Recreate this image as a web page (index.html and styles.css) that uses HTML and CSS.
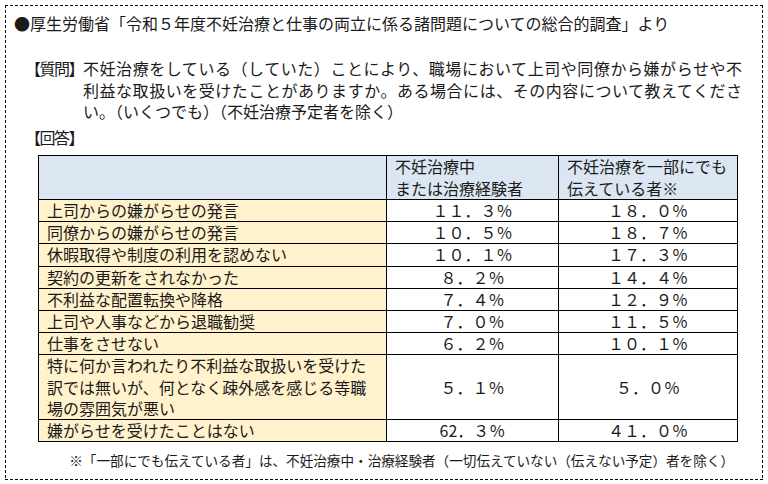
FILE: index.html
```html
<!DOCTYPE html>
<html lang="ja">
<head>
<meta charset="utf-8">
<link rel="stylesheet" href="styles.css">
</head>
<body>
<div class="frame">
  <div class="title">●厚生労働省「令和５年度不妊治療と仕事の両立に係る諸問題についての総合的調査」より</div>
  <div class="question">
    <span class="label">【質問】</span>
    <div class="qtext">
      <span class="line just">不妊治療をしている（していた）ことにより、職場において上司や同僚から嫌がらせや不</span>
      <span class="line just">利益な取扱いを受けたことがありますか。ある場合には、その内容について教えてくださ</span>
      <span class="line">い。（いくつでも）（不妊治療予定者を除く）</span>
    </div>
  </div>
  <div class="answer"><span class="label">【回答】</span></div>
  <table class="data">
    <colgroup>
      <col class="c1"><col class="c2"><col class="c3">
    </colgroup>
    <thead>
      <tr>
        <th class="blank"></th>
        <th>不妊治療中<br>または治療経験者</th>
        <th>不妊治療を一部にでも<br>伝えている者※</th>
      </tr>
    </thead>
    <tbody>
      <tr><td class="item">上司からの嫌がらせの発言</td><td class="num">１１．３％</td><td class="num">１８．０％</td></tr>
      <tr><td class="item">同僚からの嫌がらせの発言</td><td class="num">１０．５％</td><td class="num">１８．７％</td></tr>
      <tr><td class="item">休暇取得や制度の利用を認めない</td><td class="num">１０．１％</td><td class="num">１７．３％</td></tr>
      <tr><td class="item">契約の更新をされなかった</td><td class="num">８．２％</td><td class="num">１４．４％</td></tr>
      <tr><td class="item">不利益な配置転換や降格</td><td class="num">７．４％</td><td class="num">１２．９％</td></tr>
      <tr><td class="item">上司や人事などから退職勧奨</td><td class="num">７．０％</td><td class="num">１１．５％</td></tr>
      <tr><td class="item">仕事をさせない</td><td class="num">６．２％</td><td class="num">１０．１％</td></tr>
      <tr><td class="item">特に何か言われたり不利益な取扱いを受けた訳では無いが、何となく疎外感を感じる等職場の雰囲気が悪い</td><td class="num">５．１％</td><td class="num">５．０％</td></tr>
      <tr><td class="item">嫌がらせを受けたことはない</td><td class="num">62．３％</td><td class="num">４１．０％</td></tr>
    </tbody>
  </table>
  <div class="note">※「一部にでも伝えている者」は、不妊治療中・治療経験者（一切伝えていない（伝えない予定）者を除く）</div>
</div>
</body>
</html>
```
FILE: styles.css
```css
* { box-sizing: border-box; }
html, body {
  margin: 0;
  padding: 0;
  background: #fff;
}
body {
  font-family: "Noto Sans CJK JP", "Noto Sans", sans-serif;
  color: #1a1a1a;
  font-size: 16px;
  line-height: 21.3px;
}
.frame {
  margin: 5px 0 0 5px;
  width: 758px;
  height: 475px;
  padding: 8px 0 0 0;
  background:
    repeating-linear-gradient(90deg, #000 0 3px, transparent 3px 5px) left top / 100% 1px no-repeat,
    repeating-linear-gradient(90deg, #000 0 3px, transparent 3px 5px) left bottom / 100% 1px no-repeat,
    repeating-linear-gradient(180deg, #000 0 3px, transparent 3px 5px) left top / 1px 100% no-repeat,
    repeating-linear-gradient(180deg, #000 0 3px, transparent 3px 5px) right top / 1px 100% no-repeat;
}
.title {
  padding-left: 9px;
  white-space: nowrap;
}
.question {
  display: flex;
  margin: 24px 0 0 20px;
}
.label {
  display: block;
  width: 58px;
  flex: none;
  letter-spacing: -1.5px;
  white-space: nowrap;
}
.qtext {
  width: 659px;
}
.line {
  display: block;
  white-space: nowrap;
}
.line.just {
  text-align: justify;
  text-align-last: justify;
}
.answer {
  margin: 5px 0 0 20px;
}
.data {
  margin: 7px 0 0 33px;
  border-collapse: collapse;
  table-layout: fixed;
  width: 699px;
}
.c1 { width: 348px; }
.c2 { width: 172px; }
.c3 { width: 179px; }
.data th, .data td {
  border: 1px solid #000;
  padding: 0 8px;
  line-height: 21.2px;
  font-weight: normal;
  vertical-align: middle;
}
.data th {
  background: #dce6f2;
  text-align: left;
}
.data td.item {
  background: #fff2cc;
}
.data td.num {
  text-align: center;
  background: #fff;
  white-space: nowrap;
}
.note {
  margin-top: 8px;
  width: 729px;
  text-align: right;
  font-size: 13.6px;
  line-height: 20px;
  white-space: nowrap;
}
```
